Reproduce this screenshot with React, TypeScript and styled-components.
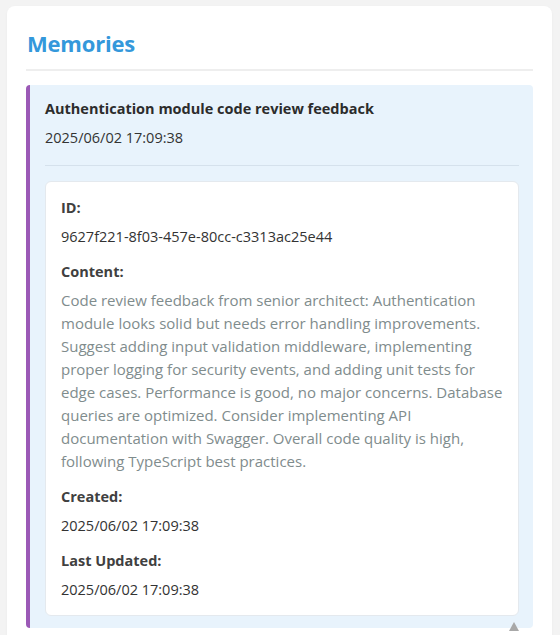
import React from "react";
import styled, { createGlobalStyle } from "styled-components";

const Global = createGlobalStyle`
  html, body { margin: 0; padding: 0; background: #f3f3f3; }
  body { font-family: "Open Sans", "Noto Sans", sans-serif; color: #333; }
  * { box-sizing: border-box; }
`;

const Page = styled.div`
  padding: 6px 8px 0 7px;
  height: 635px;
  overflow: hidden;
  position: relative;
`;

const Card = styled.div`
  background: #fff;
  border-radius: 8px;
  padding: 22px 19px 20px 19px;
  min-height: 700px;
  box-shadow: 0 1px 3px rgba(0, 0, 0, 0.04);
`;

const Heading = styled.h2`
  margin: 0;
  font-size: 22px;
  line-height: 30px;
  font-weight: 700;
  color: #3498db;
  padding: 0 0 11px 1px;
  border-bottom: 2px solid #eeeeee;
  letter-spacing: -0.2px;
`;

const Item = styled.div`
  margin-top: 14px;
  background: #e8f3fc;
  border-left: 4px solid #9b59b6;
  border-radius: 4px;
  padding: 13px 14px 12px 15px;
`;

const ItemTitle = styled.div`
  font-size: 14.5px;
  font-weight: 700;
  line-height: 22px;
  color: #2c2c2c;
`;

const ItemDate = styled.div`
  margin-top: 7px;
  font-size: 14.5px;
  line-height: 22px;
  color: #333;
`;

const Rule = styled.hr`
  border: 0;
  border-top: 1px solid #d5e1ec;
  margin: 16px 0 15px;
`;

const Detail = styled.div`
  background: #fff;
  border: 1px solid #e4e9ee;
  border-radius: 6px;
  padding: 15px 15px 14px 15px;
`;

const Field = styled.div`
  & + & { margin-top: 13px; }
`;

const Label = styled.div`
  font-size: 14.5px;
  font-weight: 700;
  line-height: 22px;
  color: #404040;
`;

const Value = styled.div<{ $muted?: boolean }>`
  margin-top: 6px;
  font-size: ${(p) => (p.$muted ? "15px" : "14.5px")};
  line-height: 23px;
  color: ${(p) => (p.$muted ? "#7f8c8d" : "#333")};
`;

const ScrollArrow = styled.div`
  position: absolute;
  left: 509px;
  top: 622px;
  width: 0;
  height: 0;
  border-left: 5px solid transparent;
  border-right: 5px solid transparent;
  border-bottom: 9px solid #a8a8a8;
`;

export default function App() {
  return (
    <>
      <Global />
      <Page>
        <Card>
          <Heading>Memories</Heading>
          <Item>
            <ItemTitle>Authentication module code review feedback</ItemTitle>
            <ItemDate>2025/06/02 17:09:38</ItemDate>
            <Rule />
            <Detail>
              <Field>
                <Label>ID:</Label>
                <Value>9627f221-8f03-457e-80cc-c3313ac25e44</Value>
              </Field>
              <Field>
                <Label>Content:</Label>
                <Value $muted>
                  Code review feedback from senior architect: Authentication module looks solid but needs error handling improvements. Suggest adding input validation middleware, implementing proper logging for security events, and adding unit tests for edge cases. Performance is good, no major concerns. Database queries are optimized. Consider implementing API documentation with Swagger. Overall code quality is high, following TypeScript best practices.
                </Value>
              </Field>
              <Field>
                <Label>Created:</Label>
                <Value>2025/06/02 17:09:38</Value>
              </Field>
              <Field>
                <Label>Last Updated:</Label>
                <Value>2025/06/02 17:09:38</Value>
              </Field>
            </Detail>
          </Item>
        </Card>
        <ScrollArrow />
      </Page>
    </>
  );
}
